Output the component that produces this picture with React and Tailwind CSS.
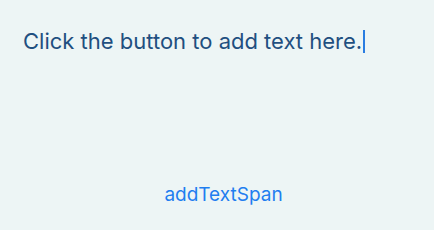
export default function App() {
  return (
    <div className="w-[434px] h-[230px] bg-[#edf5f5] flex flex-col font-['Inter',sans-serif]">
      <div className="pt-[26px] pl-[23px] flex items-center">
        <span className="text-[22px] leading-[30px] text-[#1f4f80]">Click the button to add text here.</span>
        <span className="w-[2px] h-[23px] bg-[#2a7de1] ml-[1px]" />
      </div>
      <div className="mt-auto pb-[23px] pl-[13px] flex justify-center">
        <button className="text-[19px] leading-[24px] text-[#1f7ef0]">addTextSpan</button>
      </div>
    </div>
  );
}
